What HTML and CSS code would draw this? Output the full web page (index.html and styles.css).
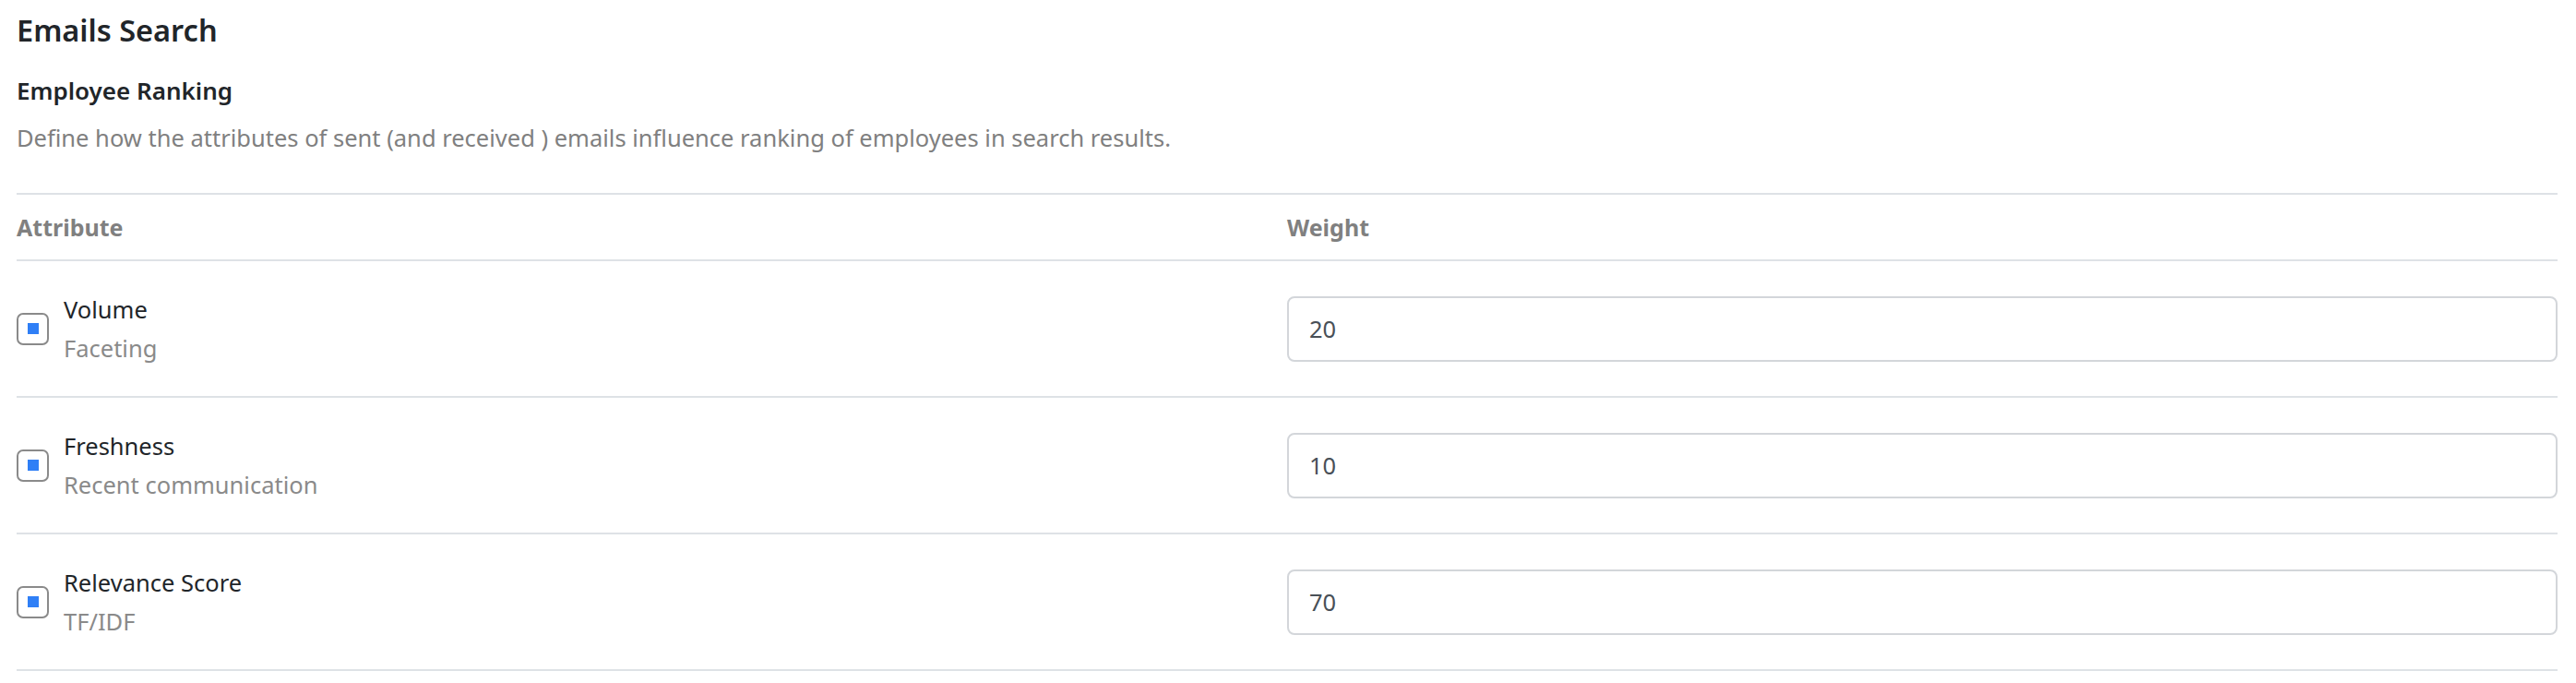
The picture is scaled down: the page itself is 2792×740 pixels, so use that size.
FILE: index.html
```html
<!DOCTYPE html>
<html lang="en">
<head>
<meta charset="utf-8">
<title>Emails Search</title>
<link rel="stylesheet" href="styles.css">
</head>
<body>
<div class="page">
  <h1 class="title">Emails Search</h1>
  <h2 class="subtitle">Employee Ranking</h2>
  <p class="desc">Define how the attributes of sent (and received ) emails influence ranking of employees in search results.</p>
  <div class="table">
    <div class="row head">
      <div class="cell">Attribute</div>
      <div class="cell">Weight</div>
    </div>
    <div class="row">
      <div class="cell attr">
        <span class="check"><span class="dot"></span></span>
        <div class="labels"><div class="name">Volume</div><div class="sub">Faceting</div></div>
      </div>
      <div class="cell"><div class="input">20</div></div>
    </div>
    <div class="row">
      <div class="cell attr">
        <span class="check"><span class="dot"></span></span>
        <div class="labels"><div class="name">Freshness</div><div class="sub">Recent communication</div></div>
      </div>
      <div class="cell"><div class="input">10</div></div>
    </div>
    <div class="row">
      <div class="cell attr">
        <span class="check"><span class="dot"></span></span>
        <div class="labels"><div class="name">Relevance Score</div><div class="sub">TF/IDF</div></div>
      </div>
      <div class="cell"><div class="input">70</div></div>
    </div>
  </div>
</div>
</body>
</html>
```
FILE: styles.css
```css
html, body {
  margin: 0;
  padding: 0;
  background: #ffffff;
}
body {
  font-family: "Noto Sans", "Open Sans", sans-serif;
  color: #212529;
}
.page {
  padding: 0 20px 0 18px;
}
.title {
  margin: 0;
  padding-top: 10px;
  font-size: 32.5px;
  line-height: 46px;
  font-weight: 600;
  color: #212529;
}
.subtitle {
  margin: 0;
  padding-top: 26px;
  font-size: 26px;
  line-height: 32px;
  font-weight: 600;
  color: #212529;
}
.desc {
  margin: 0;
  padding-top: 18px;
  font-size: 25.5px;
  line-height: 34px;
  color: #808080;
}
.table {
  margin-top: 43px;
  border-top: 2px solid #dee2e6;
}
.row {
  display: grid;
  grid-template-columns: 1fr 1fr;
  border-bottom: 2px solid #dee2e6;
  height: 146px;
  align-items: center;
}
.row.head {
  height: 70px;
  font-size: 25px;
  font-weight: 700;
  color: #808080;
}
.attr {
  display: flex;
  align-items: center;
  gap: 16px;
}
.check {
  box-sizing: border-box;
  width: 35px;
  height: 35px;
  border: 2px solid #8a8a8a;
  border-radius: 7px;
  display: flex;
  align-items: center;
  justify-content: center;
  flex: none;
}
.dot {
  width: 12px;
  height: 12px;
  background: #2f7ff6;
}
.labels {
  display: flex;
  flex-direction: column;
  gap: 6px;
}
.name {
  font-size: 25.5px;
  line-height: 36px;
  color: #212529;
}
.sub {
  font-size: 25.5px;
  line-height: 36px;
  color: #8a8a8a;
}
.input {
  box-sizing: border-box;
  height: 71px;
  border: 2px solid #d3d6da;
  border-radius: 8px;
  padding: 0 22px;
  display: flex;
  align-items: center;
  font-size: 25.5px;
  color: #495057;
}
```
